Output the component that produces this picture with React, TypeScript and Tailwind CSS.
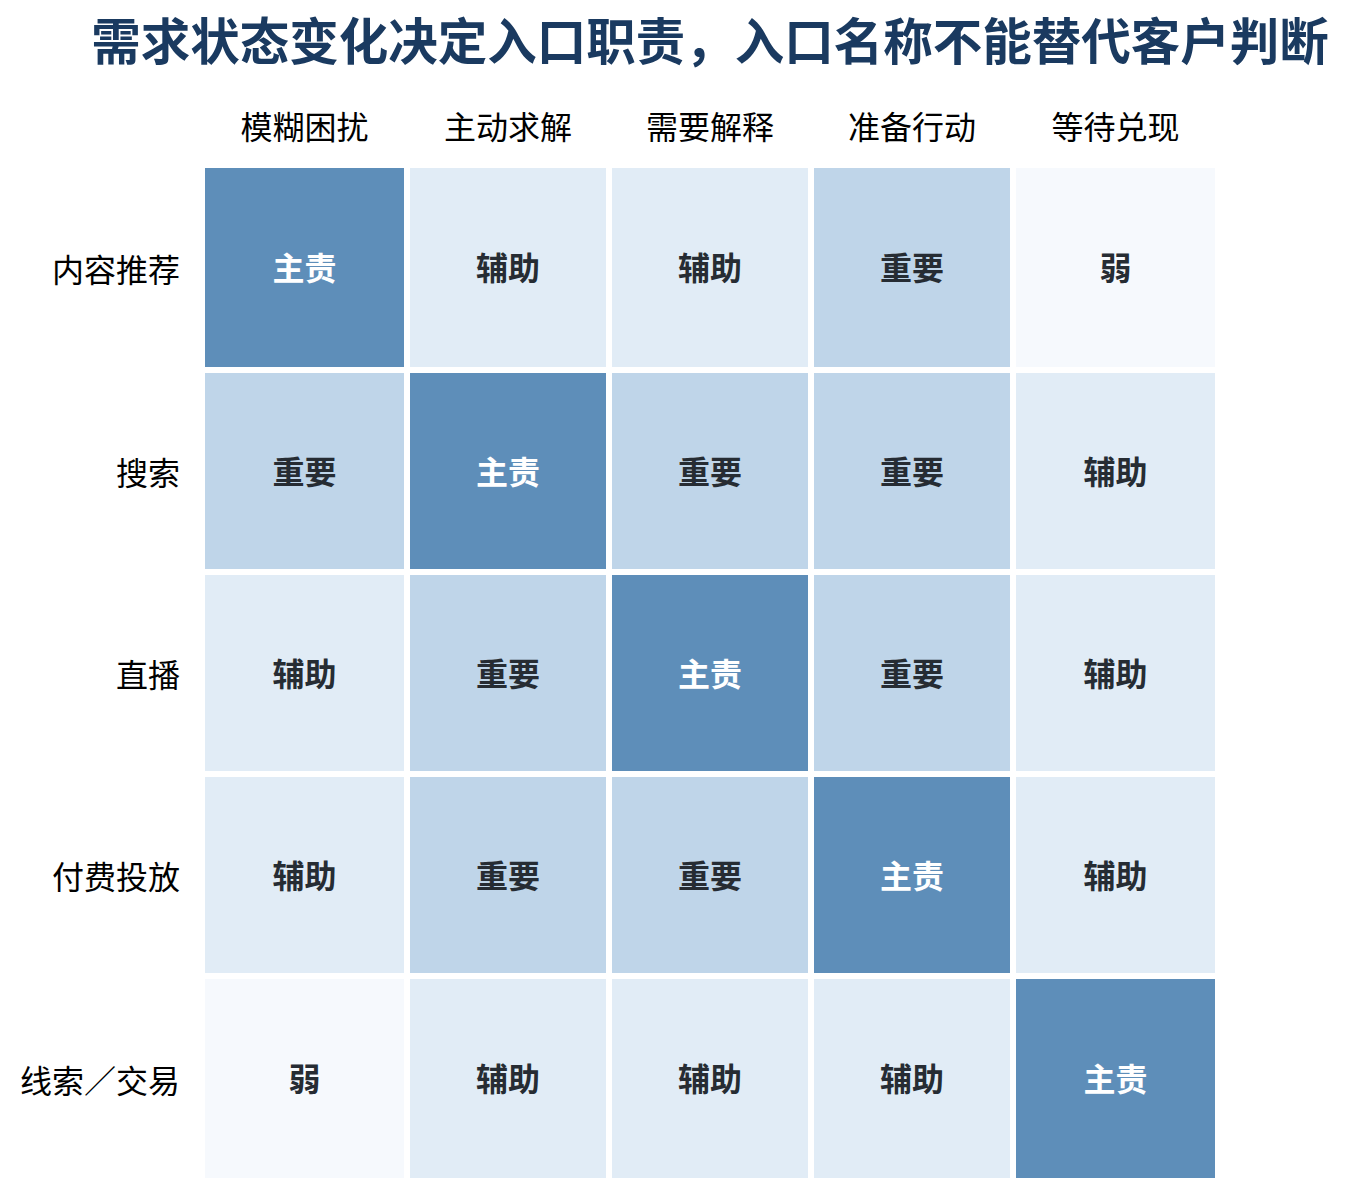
const COLS = ['模糊困扰', '主动求解', '需要解释', '准备行动', '等待兑现'];

const ROWS: { label: string; cells: string[] }[] = [
  { label: '内容推荐', cells: ['主责', '辅助', '辅助', '重要', '弱'] },
  { label: '搜索', cells: ['重要', '主责', '重要', '重要', '辅助'] },
  { label: '直播', cells: ['辅助', '重要', '主责', '重要', '辅助'] },
  { label: '付费投放', cells: ['辅助', '重要', '重要', '主责', '辅助'] },
  { label: '线索／交易', cells: ['弱', '辅助', '辅助', '辅助', '主责'] },
];

const CELL_STYLE: Record<string, string> = {
  主责: 'bg-[#5e8eb9] text-white',
  重要: 'bg-[#bfd5e9] text-[#262c33]',
  辅助: 'bg-[#e1ecf6] text-[#262c33]',
  弱: 'bg-[#f6f9fd] text-[#262c33]',
};

export default function App() {
  return (
    <div
      className="w-[1351px] h-[1199px] bg-white"
      style={{ fontFamily: '"Noto Sans CJK SC", "Noto Sans", sans-serif' }}
    >
      {/* Title, centred over the heatmap */}
      <div className="ml-[205px] w-[1010px] pt-[14px] flex justify-center">
        <h1 className="whitespace-nowrap text-[49.5px] leading-[50px] font-bold text-[#1a3a60]">
          需求状态变化决定入口职责，入口名称不能替代客户判断
        </h1>
      </div>

      <div className="mt-[38px] grid grid-cols-[199px_199px_196px_196px_196px_199px] grid-rows-[60px_199px_196px_196px_196px_199px] gap-[6px]">
        <div />
        {COLS.map((c) => (
          <div key={c} className="flex items-center justify-center pb-[14px] text-[32px] text-black">
            {c}
          </div>
        ))}

        {ROWS.map((row) => (
          <>
            <div
              key={row.label}
              className="flex items-center justify-end pr-[19px] text-[32px] text-black whitespace-nowrap"
            >
              {row.label}
            </div>
            {row.cells.map((v, i) => (
              <div
                key={row.label + i}
                className={`flex items-center justify-center pb-[3px] text-[32px] font-bold ${CELL_STYLE[v]}`}
              >
                {v}
              </div>
            ))}
          </>
        ))}
      </div>
    </div>
  );
}
